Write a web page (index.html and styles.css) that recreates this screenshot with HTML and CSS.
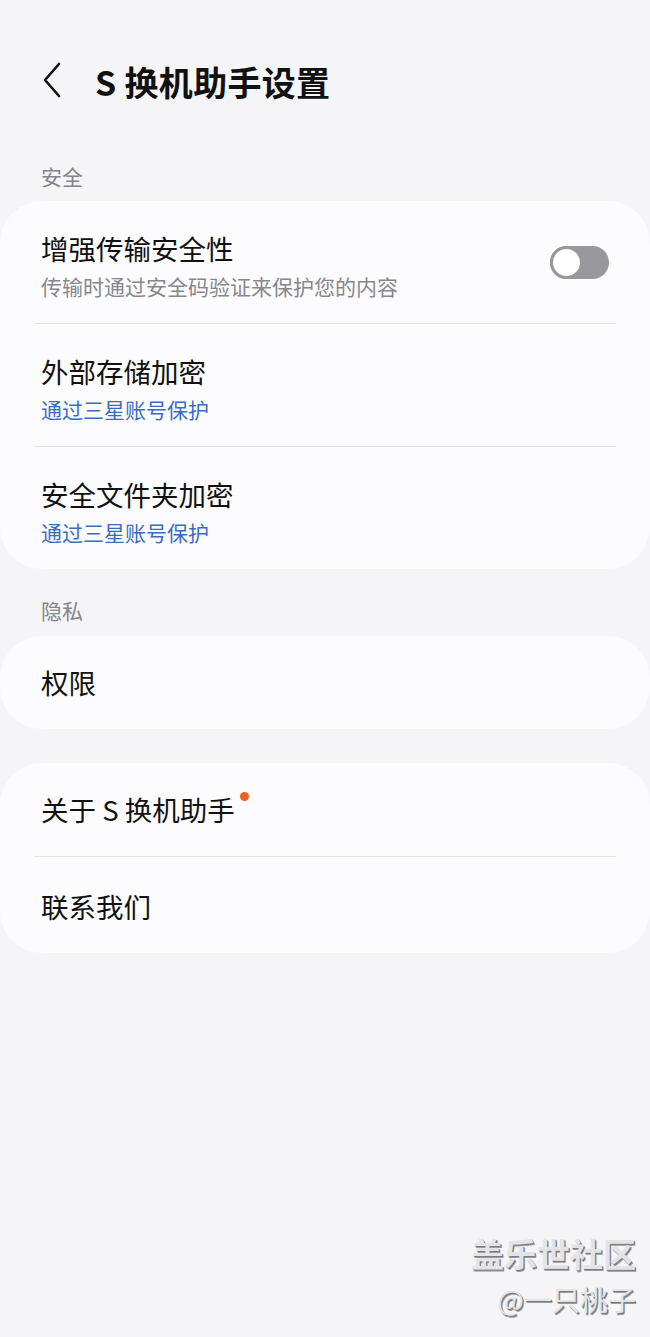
FILE: index.html
```html
<!DOCTYPE html>
<html lang="zh-CN">
<head>
<meta charset="utf-8">
<title>S 换机助手设置</title>
<link rel="stylesheet" href="styles.css">
</head>
<body>
<div class="page">
  <header class="header">
    <svg class="back" width="20" height="36" viewBox="0 0 20 36" aria-hidden="true">
      <path d="M17 2 L3 18 L17 34" fill="none" stroke="#111" stroke-width="2.6" stroke-linecap="round" stroke-linejoin="round"/>
    </svg>
    <h1 class="title">S 换机助手设置</h1>
  </header>

  <div class="section-label first">安全</div>
  <section class="card">
    <div class="row">
      <div class="row-text">
        <div class="row-title">增强传输安全性</div>
        <div class="row-sub gray">传输时通过安全码验证来保护您的内容</div>
      </div>
      <div class="toggle"><span class="knob"></span></div>
    </div>
    <div class="divider"></div>
    <div class="row">
      <div class="row-text">
        <div class="row-title">外部存储加密</div>
        <div class="row-sub blue">通过三星账号保护</div>
      </div>
    </div>
    <div class="divider"></div>
    <div class="row">
      <div class="row-text">
        <div class="row-title">安全文件夹加密</div>
        <div class="row-sub blue">通过三星账号保护</div>
      </div>
    </div>
  </section>

  <div class="section-label">隐私</div>
  <section class="card">
    <div class="row single">
      <div class="row-title">权限</div>
    </div>
  </section>

  <section class="card spaced">
    <div class="row single">
      <div class="row-title">关于 S 换机助手<span class="dot"></span></div>
    </div>
    <div class="divider"></div>
    <div class="row single last">
      <div class="row-title">联系我们</div>
    </div>
  </section>

  <div class="watermark">
    <div class="wm-main">盖乐世社区</div>
    <div class="wm-sub">@一只桃子</div>
  </div>
</div>
</body>
</html>
```

FILE: styles.css
```css
html, body {
  margin: 0;
  padding: 0;
  background: #f5f5f8;
}

body {
  font-family: "Noto Sans CJK SC", "Noto Sans", sans-serif;
  color: #111;
}

.page {
  position: relative;
  width: 650px;
  height: 1337px;
  overflow: hidden;
}

.header {
  display: flex;
  align-items: center;
  height: 60px;
  margin-top: 52px;
  padding-left: 42px;
}

.back {
  display: block;
  margin-top: -4px;
}

.title {
  margin: 0 0 0 33px;
  font-size: 34px;
  font-weight: 700;
  line-height: 40px;
  color: #111;
  letter-spacing: 0.3px;
}

.section-label {
  margin: 27px 0 12px;
  padding-left: 41px;
  font-size: 21px;
  line-height: 28px;
  color: #848489;
}

.section-label.first {
  margin-top: 50px;
  margin-bottom: 11px;
}

.card {
  background: #fcfcfe;
  border-radius: 42px;
}

.card.spaced {
  margin-top: 34px;
}

.row {
  display: flex;
  align-items: center;
  justify-content: space-between;
  padding: 29px 41px 23px;
}

.row.single {
  padding: 28px 41px 29px;
}

.row.single.last {
  padding: 31px 41px 29px;
}

.row-text {
  display: flex;
  flex-direction: column;
  gap: 6px;
}

.row-title {
  font-size: 27.5px;
  line-height: 36px;
  color: #111;
}

.row-sub {
  font-size: 21px;
  line-height: 28px;
}

.row-sub.gray {
  color: #87878c;
}

.row-sub.blue {
  color: #3b6cc4;
}

.divider {
  height: 1px;
  margin: 0 34px;
  background: #e4e4e8;
}

.toggle {
  width: 59px;
  height: 33px;
  margin-bottom: 6px;
  border-radius: 17px;
  background: #98989c;
  box-sizing: border-box;
  display: flex;
  align-items: center;
}

.knob {
  width: 33px;
  height: 33px;
  border-radius: 50%;
  box-sizing: border-box;
  border: 3px solid #98989c;
  background: #ffffff;
}

.dot {
  display: inline-block;
  width: 9px;
  height: 9px;
  border-radius: 50%;
  background: #e8631f;
  vertical-align: top;
  margin: 0 0 0 5px;
  position: relative;
  top: 1px;
}

.watermark {
  position: absolute;
  right: 14px;
  top: 1230px;
  text-align: right;
  color: #e4e4e6;
  text-shadow: 1px 1px 0 #7c7c7e, 1.5px 1.5px 0 #9a9a9c;
}

.wm-main {
  font-size: 33px;
  font-weight: 700;
  line-height: 46px;
}

.wm-sub {
  font-size: 28px;
  line-height: 38px;
  margin-top: 4px;
}
```
